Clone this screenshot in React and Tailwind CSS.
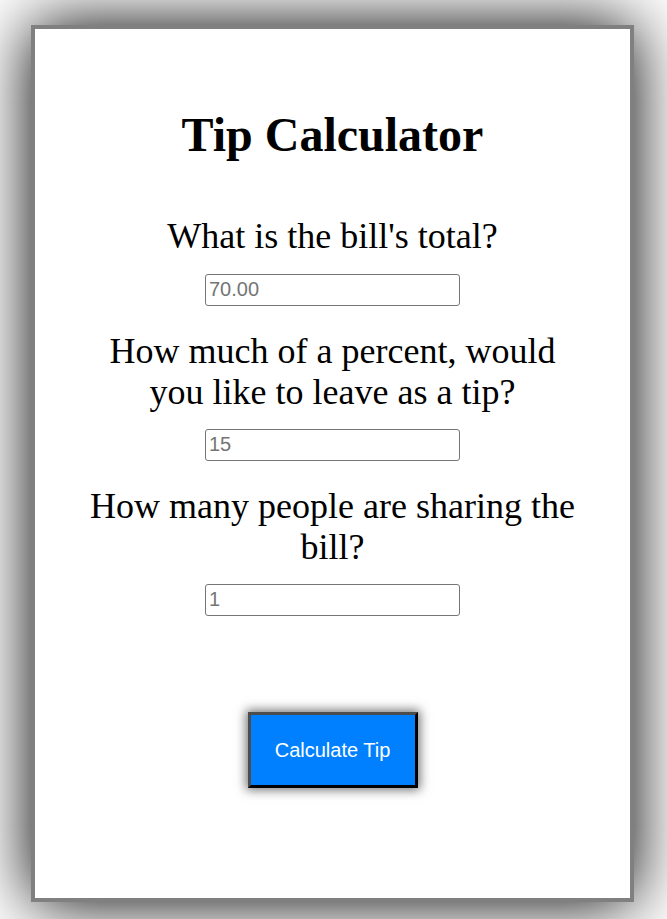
export default function App() {
  const serif = { fontFamily: '"Liberation Serif", "Times New Roman", serif' };
  const sans = { fontFamily: '"Liberation Sans", Arial, sans-serif' };
  return (
    <div className="w-[667px] h-[919px] overflow-hidden bg-white pt-[25px] pl-[31px]">
      <div
        className="w-[603px] h-[877px] border-4 border-[#808080] bg-white shadow-[0_0_64px_0_#000] flex flex-col items-center text-black"
        style={serif}
      >
        <h1 className="mt-[78px] text-[48px] leading-[55px] font-bold">Tip Calculator</h1>
        <div className="mt-[54px] w-[496px] text-center text-[36px] leading-[41.5px]">What is the bill's total?</div>
        <input
          className="mt-[16px] w-[255px] h-[32px] border border-[#767676] rounded-[3px] pl-[3px] pr-[2px] text-[20px] placeholder:text-[#757575] outline-none"
          style={sans}
          placeholder="70.00"
        />
        <div className="mt-[25px] w-[496px] text-center text-[36px] leading-[41.5px]">
          How much of a percent, would you like to leave as a tip?
        </div>
        <input
          className="mt-[15px] w-[255px] h-[32px] border border-[#767676] rounded-[3px] pl-[3px] pr-[2px] text-[20px] placeholder:text-[#757575] outline-none"
          style={sans}
          placeholder="15"
        />
        <div className="mt-[25px] w-[496px] text-center text-[36px] leading-[41.5px]">
          How many people are sharing the bill?
        </div>
        <input
          className="mt-[15px] w-[255px] h-[32px] border border-[#767676] rounded-[3px] pl-[3px] pr-[2px] text-[20px] placeholder:text-[#757575] outline-none"
          style={sans}
          placeholder="1"
        />
        <button
          className="mt-[96px] w-[170px] h-[76px] bg-[#0080ff] text-white text-[20px] border-[3px] border-t-[#4d4d4d] border-l-[#4d4d4d] border-r-black border-b-black shadow-[0_0_10px_2px_rgba(0,0,0,0.55)]"
          style={sans}
        >
          Calculate Tip
        </button>
      </div>
    </div>
  );
}
